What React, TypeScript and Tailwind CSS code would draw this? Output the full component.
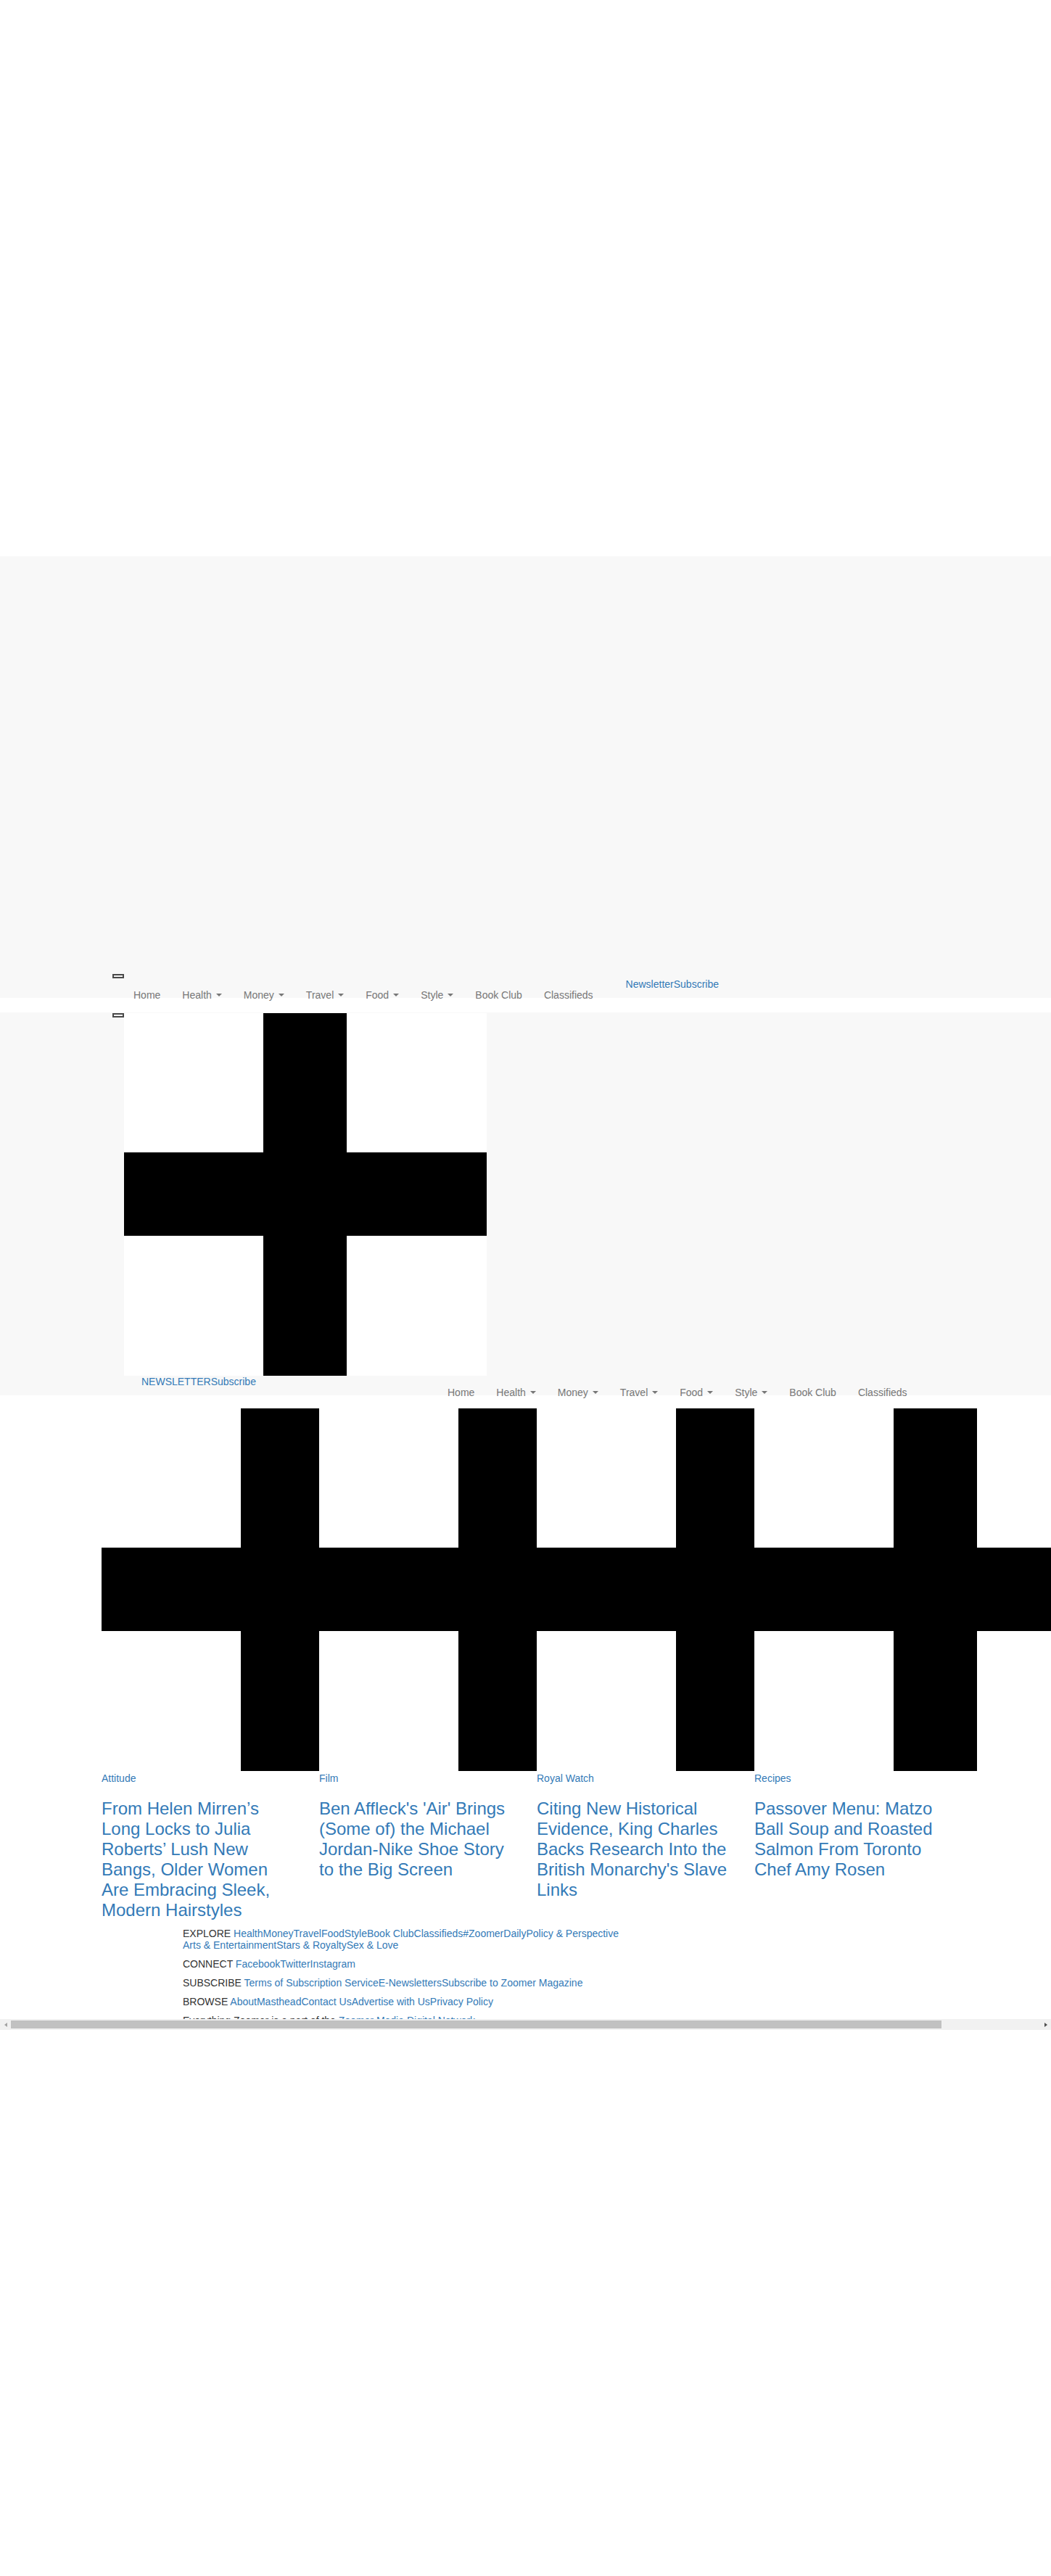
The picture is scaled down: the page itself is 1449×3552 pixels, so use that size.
import React from 'react';

const navItems = [
  { label: 'Home', caret: false },
  { label: 'Health', caret: true },
  { label: 'Money', caret: true },
  { label: 'Travel', caret: true },
  { label: 'Food', caret: true },
  { label: 'Style', caret: true },
  { label: 'Book Club', caret: false },
  { label: 'Classifieds', caret: false },
];

const articles = [
  {
    category: 'Attitude',
    title: 'From Helen Mirren’s Long Locks to Julia Roberts’ Lush New Bangs, Older Women Are Embracing Sleek, Modern Hairstyles',
  },
  {
    category: 'Film',
    title: "Ben Affleck's 'Air' Brings (Some of) the Michael Jordan-Nike Shoe Story to the Big Screen",
  },
  {
    category: 'Royal Watch',
    title: "Citing New Historical Evidence, King Charles Backs Research Into the British Monarchy's Slave Links",
  },
  {
    category: 'Recipes',
    title: 'Passover Menu: Matzo Ball Soup and Roasted Salmon From Toronto Chef Amy Rosen',
  },
];

function Plus({ className }: { className?: string }) {
  return (
    <svg viewBox="0 0 500 500" className={className}>
      <rect width="500" height="500" fill="#fff" />
      <rect x="192" width="115" height="500" fill="#000" />
      <rect y="192" width="500" height="115" fill="#000" />
    </svg>
  );
}

function Toggle() {
  return <div className="w-[16px] h-[6px] shrink-0 border-2 border-[#4a4a4a] bg-[#f4f4f4]" />;
}

function Nav({ className }: { className?: string }) {
  return (
    <ul className={`flex shrink-0 text-[#777] leading-[20px] ${className ?? ''}`}>
      {navItems.map((item) => (
        <li key={item.label} className="flex items-center px-[15px] whitespace-nowrap">
          <span>{item.label}</span>
          {item.caret && (
            <span className="ml-[6px] inline-block w-0 h-0 border-t-[4px] border-x-[4px] border-t-[#777] border-x-transparent" />
          )}
        </li>
      ))}
    </ul>
  );
}

function FooterGroup({ label, links }: { label: string; links: string[] }) {
  return (
    <div className="mb-[10px]">
      <span className="text-[#333]">{label} </span>
      {links.map((l) => (
        <a key={l} className="text-[#337ab7]">
          {l}
        </a>
      ))}
    </div>
  );
}

// horizontal scrollbar of the page frame, drawn so it shows in the capture
function ScrollBar() {
  return (
    <div className="flex h-[15px] items-center bg-[#f1f1f1]">
      <div className="flex w-[15px] h-[15px] shrink-0 items-center justify-center">
        <span className="inline-block w-0 h-0 border-y-[3px] border-r-[4px] border-y-transparent border-r-[#a3a3a3]" />
      </div>
      <div className="w-[1283px] h-[11px] shrink-0 bg-[#c1c1c1]" />
      <div className="flex-1" />
      <div className="flex w-[15px] h-[15px] shrink-0 items-center justify-center">
        <span className="inline-block w-0 h-0 border-y-[3px] border-l-[4px] border-y-transparent border-l-[#505050]" />
      </div>
    </div>
  );
}

export default function App() {
  return (
    <div className="bg-white font-['Liberation_Sans',Arial,sans-serif] text-[14px] leading-[20px] text-[#333]">
      <div className="h-[2784px] overflow-hidden">
        <div className="w-[1602px]">
          {/* ad space */}
          <div className="h-[767px]" />

          {/* first navbar */}
          <div className="h-[609px] bg-[#f8f8f8] pt-[576px] pl-[155px]">
            <Toggle />
            <div className="flex items-start">
              <Nav className="ml-[14px] mt-[13px]" />
              <div className="ml-[30px] -mt-[2px] text-[#337ab7] whitespace-nowrap">
                <a>Newsletter</a>
                <a>Subscribe</a>
              </div>
            </div>
          </div>

          <div className="h-[20px]" />

          {/* second navbar with logo */}
          <div className="h-[528px] bg-[#f8f8f8] pt-[1px] pl-[155px]">
            <div className="flex items-start">
              <Toggle />
              <Plus className="block w-[500px] h-[500px] shrink-0" />
            </div>
            <div className="flex items-start -mt-[2px]">
              <div className="ml-[40px] w-[407px] shrink-0 text-[#337ab7] whitespace-nowrap">
                <a>NEWSLETTER</a>
                <a>Subscribe</a>
              </div>
              <Nav className="mt-[15px]" />
            </div>
          </div>

          {/* articles */}
          <div className="flex pl-[140px] pt-[18px]">
            {articles.map((a) => (
              <div key={a.category} className="w-[300px] shrink-0">
                <Plus className="block w-[500px] h-[500px] max-w-none" />
                <div className="text-[#337ab7]">{a.category}</div>
                <h3 className="mt-[18px] mb-[10px] pr-[30px] text-[24px] leading-[28px] font-normal text-[#337ab7]">
                  {a.title}
                </h3>
              </div>
            ))}
          </div>

          {/* footer */}
          <div className="pl-[252px] leading-[16px]">
            <div className="mb-[10px]">
              <span className="text-[#333]">EXPLORE </span>
              {['Health', 'Money', 'Travel', 'Food', 'Style', 'Book Club', 'Classifieds', '#ZoomerDaily', 'Policy & Perspective'].map((l) => (
                <a key={l} className="text-[#337ab7]">
                  {l}
                </a>
              ))}
              <br />
              {['Arts & Entertainment', 'Stars & Royalty', 'Sex & Love'].map((l) => (
                <a key={l} className="text-[#337ab7]">
                  {l}
                </a>
              ))}
            </div>
            <FooterGroup label="CONNECT" links={['Facebook', 'Twitter', 'Instagram']} />
            <FooterGroup
              label="SUBSCRIBE"
              links={['Terms of Subscription Service', 'E-Newsletters', 'Subscribe to Zoomer Magazine']}
            />
            <FooterGroup
              label="BROWSE"
              links={['About', 'Masthead', 'Contact Us', 'Advertise with Us', 'Privacy Policy']}
            />
            <div className="mb-[10px]">
              <span className="text-[#333]">Everything Zoomer is a part of the </span>
              <a className="text-[#337ab7]">Zoomer Media Digital Network</a>
            </div>
          </div>
        </div>
      </div>
      <ScrollBar />
    </div>
  );
}
